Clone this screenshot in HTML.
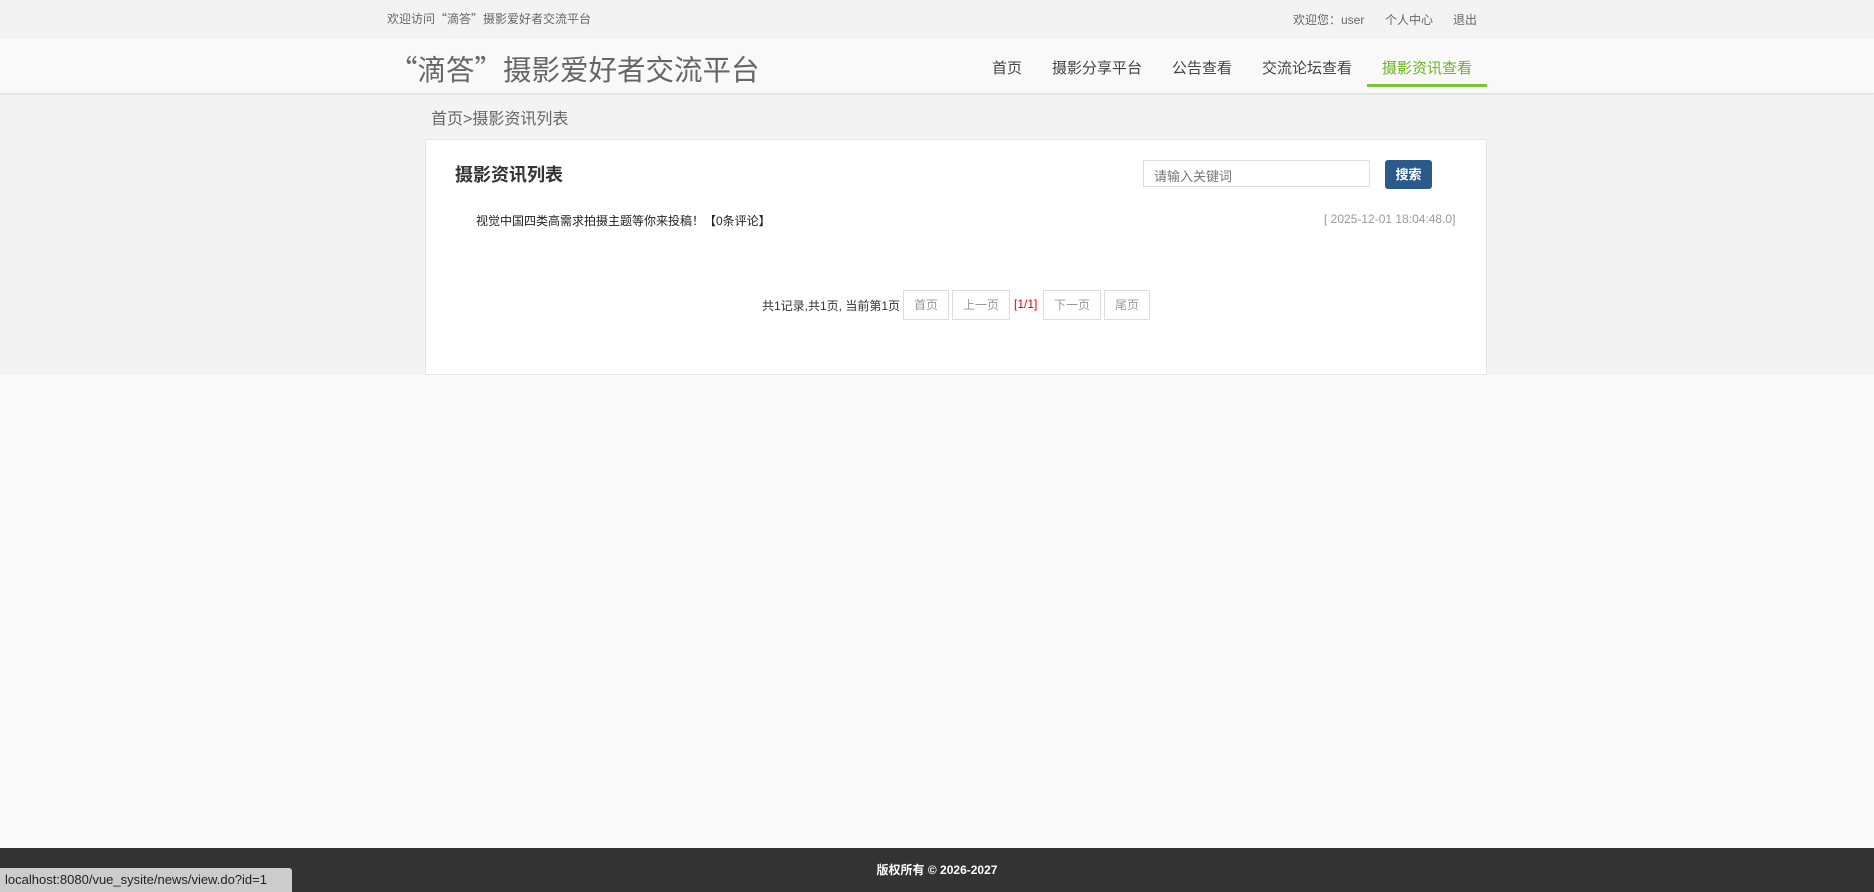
<!DOCTYPE html>
<html><head><meta charset="utf-8"><style>
*{margin:0;padding:0;box-sizing:border-box}
body{width:1874px;height:892px;position:relative;background:#fafafa;font-family:"Liberation Sans","Noto Sans CJK SC",sans-serif;overflow:hidden}
.a{position:absolute;white-space:nowrap}
.c{font-family:"Noto Sans CJK SC",sans-serif}
.pb{position:absolute;top:290px;height:30px;border:1px solid #ddd;font-size:12px;color:#999;text-align:center;line-height:28px;background:#fff}
</style></head><body>
<div class="a" style="left:0;top:0;width:1874px;height:39px;background:#f3f3f3"></div>
<div class="a c" style="left:387px;top:10px;font-size:12px;color:#666">欢迎访问“滴答”摄影爱好者交流平台</div>
<div class="a" style="left:1293px;top:11px;font-size:12px;color:#666">欢迎您：user</div>
<div class="a" style="left:1385px;top:11px;font-size:12px;color:#666">个人中心</div>
<div class="a" style="left:1453px;top:11px;font-size:12px;color:#666">退出</div>
<div class="a" style="left:0;top:39px;width:1874px;height:55px;background:#f9f9f9;border-bottom:1px solid #e2e2e2;box-shadow:0 1px 2px #ddd"></div>
<div class="a c" style="left:389px;top:48px;font-size:28.5px;color:#666">“滴答”摄影爱好者交流平台</div>
<div class="a" style="left:992px;top:57px;font-size:15px;color:#444">首页</div>
<div class="a" style="left:1052px;top:57px;font-size:15px;color:#444">摄影分享平台</div>
<div class="a" style="left:1172px;top:57px;font-size:15px;color:#444">公告查看</div>
<div class="a" style="left:1262px;top:57px;font-size:15px;color:#444">交流论坛查看</div>
<div class="a" style="left:1382px;top:57px;font-size:15px;color:#6bb51e">摄影资讯查看</div>
<div class="a" style="left:1367px;top:84px;width:120px;height:3px;background:#7dc33a"></div>
<div class="a" style="left:0;top:95px;width:1874px;height:280px;background:#f3f3f3"></div>
<div class="a" style="left:431px;top:105px;font-size:16px;color:#666">首页&gt;摄影资讯列表</div>
<div class="a" style="left:425px;top:139px;width:1062px;height:236px;background:#fff;border:1px solid #e6e6e6"></div>
<div class="a" style="left:455px;top:161px;font-size:18px;font-weight:bold;color:#333">摄影资讯列表</div>
<div class="a" style="left:1143px;top:160px;width:227px;height:27px;border:1px solid #ddd;background:#fff;font-size:13px;color:#777;padding:5px 10px">请输入关键词</div>
<div class="a" style="left:1385px;top:160px;width:47px;height:29px;background:#2a5a8c;border-radius:3px;color:#fff;font-size:13px;font-weight:bold;text-align:center;line-height:29px">搜索</div>
<div class="a" style="left:476px;top:212px;font-size:12px;color:#222">视觉中国四类高需求拍摄主题等你来投稿！【0条评论】</div>
<div class="a" style="left:1324px;top:212px;font-size:12px;color:#999">[ 2025-12-01 18:04:48.0]</div>
<div class="a" style="left:762px;top:297px;font-size:12px;color:#333">共1记录,共1页, 当前第1页</div>
<div class="pb" style="left:903px;width:46px">首页</div>
<div class="pb" style="left:952px;width:58px">上一页</div>
<div class="a" style="left:1014px;top:297px;font-size:12px;color:#e00">[1/1]</div>
<div class="pb" style="left:1043px;width:58px">下一页</div>
<div class="pb" style="left:1104px;width:46px">尾页</div>
<div class="a" style="left:0;top:848px;width:1874px;height:44px;background:#333;color:#fff;font-size:12px;font-weight:bold;text-align:center;line-height:44px">版权所有 © 2026-2027</div>
<div class="a" style="left:0;top:868px;width:292px;height:24px;background:#ccc;border-top-right-radius:3px;font-size:13px;color:#222;padding:4px 0 0 5px">localhost:8080/vue_sysite/news/view.do?id=1</div>
</body></html>
